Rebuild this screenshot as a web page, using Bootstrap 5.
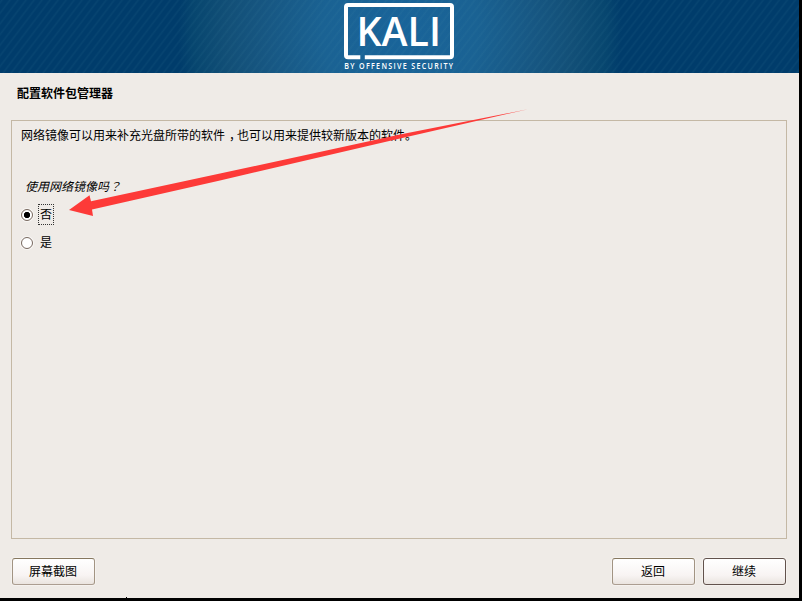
<!DOCTYPE html>
<html lang="zh-CN">
  <head>
    <meta charset="UTF-8" />
    <meta name="viewport" content="width=device-width, initial-scale=1" />
    <title>配置软件包管理器</title>

    <link href="https://cdn.jsdelivr.net/npm/bootstrap@5.3.0/dist/css/bootstrap.min.css" rel="stylesheet" />

    <style>
      body {
        background: #000;
        color: #000;
        font-family: 'Open Sans', 'Noto Sans CJK SC', sans-serif;
        font-size: 12px;
        line-height: 18px;
      }

      /* Installer window, the screen behind it stays black */
      .installer {
        width: 799px;
        height: 598px;
        background: #efebe7;
      }

      /* Banner: diagonal stripes over a glow in the middle */
      .banner {
        height: 73px;
        background:
          repeating-linear-gradient(127deg, rgba(80, 150, 170, 0) 0, rgba(80, 150, 170, 0.09) 1.6px, rgba(80, 150, 170, 0) 3.2px 6.4px),
          radial-gradient(ellipse 222px 250px at 400px 32px, #19649a 0%, #1a6293 35%, #175783 60%, #124f77 78%, #07466f 93%, #003c6b 100%);
      }

      .page-title {
        font-size: 12px;
        line-height: 18px;
        padding: 12px 17px 0;
        height: 47px;
      }

      .question-panel {
        height: 419px;
        margin: 0 12px 0 11px;
        padding: 6px 9px;
        border: 1px solid #c4b8a5;
      }

      .question {
        height: 18px;
        margin: 33px 0 0 4px;
      }

      /* Half-width comma centred in a full-width cell */
      .comma {
        font-feature-settings: 'halt';
        margin: 0 2px 0 4px;
      }

      .question-mark {
        font-family: 'Noto Sans CJK TC', sans-serif;
        line-height: 1;
      }

      .answers {
        margin-top: 8px;
        gap: 7px;
      }

      .answers .form-check {
        height: 21px;
        min-height: 0;
        padding: 0;
        gap: 5px;
      }

      .answers .form-check-input {
        width: 12px;
        height: 12px;
        margin: 0;
        float: none;
        border-color: #77685f;
        background: #fff;
        box-shadow: 0 0 0 1px #f9f7f5;
      }

      .answers .form-check-input:checked {
        background: radial-gradient(circle, #000 0 2.8px, #fff 3.5px);
      }

      .answers label {
        border: 1px dotted transparent;
        width: 16px;
        height: 21px;
        padding-left: 1px;
        line-height: 19px;
      }

      .answers .focused {
        border-color: #333;
      }

      .bottom-bar {
        padding: 19px 13px 0 12px;
        gap: 8px;
      }

      .bottom-bar .btn {
        width: 83px;
        height: 27px;
        padding: 1px 1px 0 0;
        font-size: 12px;
        line-height: 18px;
        color: #000;
        border: 1px solid;
        border-color: #86775f #a29483 #ab9d91 #a29483;
        border-radius: 3px;
        background: linear-gradient(#fff, #f8f4f3 65%, #eae4df);
        box-shadow: 0 0 0 1px #f5f2ef;
      }

      .bottom-bar .btn-default-action {
        border-color: #62524c;
      }

      .arrow {
        left: 0;
        top: 0;
        pointer-events: none;
      }
    </style>
  </head>
  <body>
    <main class="installer position-relative d-flex flex-column">
      <header class="banner flex-shrink-0">
        <svg class="d-block" width="799" height="73" role="img" aria-label="Kali by Offensive Security">
          <path d="M360.3 57.2H348q-2 0-2-2V7q0-2 2-2h102q2 0 2 2v48.2q0 2-2 2h-85.2" fill="none" stroke="#fff" stroke-width="4" />
          <text x="356.5" y="45.7" textLength="84.5" lengthAdjust="spacingAndGlyphs" font-family="Open Sans" font-size="39" font-weight="600" fill="#fff">KALI</text>
          <text transform="translate(344.3 69) scale(0.86 1)" textLength="126.5" font-family="Open Sans" font-size="8.3" font-weight="600" fill="#fff">BY OFFENSIVE SECURITY</text>
        </svg>
      </header>

      <h1 class="page-title fw-bold mb-0">配置软件包管理器</h1>

      <section class="question-panel">
        <p class="mb-0">网络镜像可以用来补充光盘所带的软件<span class="comma">，</span>也可以用来提供较新版本的软件。</p>
        <p class="question fst-italic mb-0">使用网络镜像吗<span class="question-mark" lang="zh-TW">？</span></p>
        <div class="answers d-flex flex-column">
          <div class="form-check d-flex align-items-center mb-0">
            <input class="form-check-input" type="radio" name="mirror" id="mirrorNo" checked />
            <label class="focused" for="mirrorNo">否</label>
          </div>
          <div class="form-check d-flex align-items-center mb-0">
            <input class="form-check-input" type="radio" name="mirror" id="mirrorYes" />
            <label for="mirrorYes">是</label>
          </div>
        </div>
      </section>

      <footer class="bottom-bar d-flex">
        <button type="button" class="btn me-auto">屏幕截图</button>
        <button type="button" class="btn">返回</button>
        <button type="button" class="btn btn-default-action">继续</button>
      </footer>

      <!-- Arrow pointing at the "no" answer -->
      <svg class="arrow position-absolute" width="799" height="598">
        <path d="M69 210L89.5 195.2L91 201.2L220 173.5L400 134.5L528 109.2L400 138.4L220 180.5L92 209.5L93 216Z" fill="#fd3a38" />
        <path d="M126 597h1v1h-1z" fill="#000" />
      </svg>
    </main>

    <script src="https://cdn.jsdelivr.net/npm/bootstrap@5.3.0/dist/js/bootstrap.bundle.min.js"></script>
  </body>
</html>
